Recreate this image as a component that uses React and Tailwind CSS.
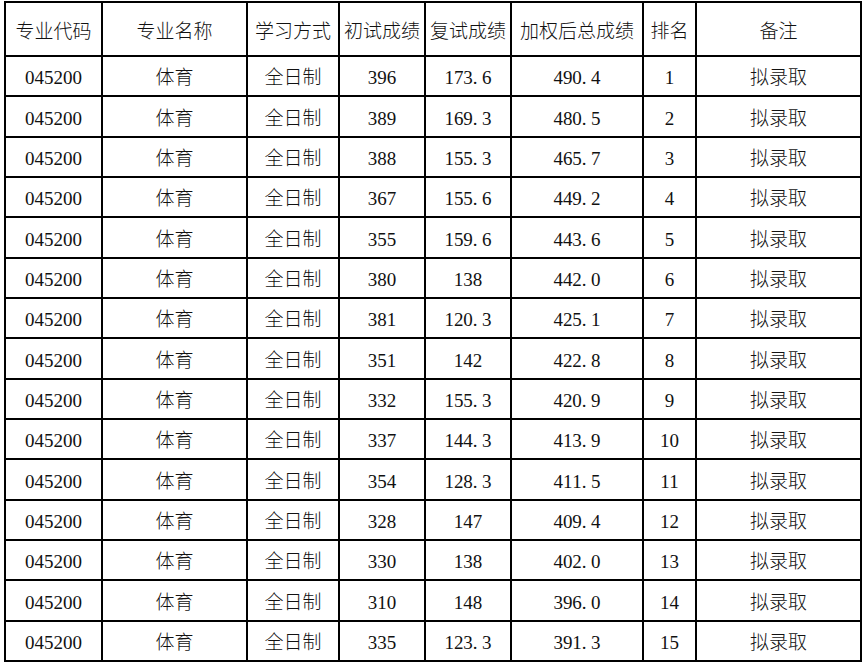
import React from "react";

const rows = [
  ["396", "173.6", "490.4", "1"],
  ["389", "169.3", "480.5", "2"],
  ["388", "155.3", "465.7", "3"],
  ["367", "155.6", "449.2", "4"],
  ["355", "159.6", "443.6", "5"],
  ["380", "138", "442.0", "6"],
  ["381", "120.3", "425.1", "7"],
  ["351", "142", "422.8", "8"],
  ["332", "155.3", "420.9", "9"],
  ["337", "144.3", "413.9", "10"],
  ["354", "128.3", "411.5", "11"],
  ["328", "147", "409.4", "12"],
  ["330", "138", "402.0", "13"],
  ["310", "148", "396.0", "14"],
  ["335", "123.3", "391.3", "15"],
];

const headers = ["专业代码", "专业名称", "学习方式", "初试成绩", "复试成绩", "加权后总成绩", "排名", "备注"];

function Num({ v }) {
  if (!v.includes(".")) return <span>{v}</span>;
  return (
    <span className="inline-flex">
      {v.split("").map((c, i) => (
        <span key={i} className={c === "." ? "inline-block w-[9.4px] text-left" : "inline-block w-[9.4px] text-center"}>
          {c}
        </span>
      ))}
    </span>
  );
}

function Cell({ children, className = "" }) {
  return (
    <div className={"bg-white flex items-center justify-center whitespace-nowrap " + className}>
      {children}
    </div>
  );
}

export default function App() {
  return (
    <div className="bg-white w-[867px] h-[668px] pt-[1px] pl-[4px] text-[19px] font-light text-[#111] leading-none [font-family:'Liberation_Serif','Noto_Sans_CJK_SC',serif]">
      <div className="grid w-fit bg-black border-2 border-black gap-[2px] grid-cols-[95px_143px_90px_84px_84px_130px_51px_163px] grid-rows-[52px_38px_39px_38px_38px_39px_38px_38px_39px_38px_38px_39px_38px_38px_39px_38px]">
        {headers.map((h) => (
          <Cell key={h} className="pt-[4px]">{h}</Cell>
        ))}
        {rows.map((r, i) => (
          <React.Fragment key={i}>
            <Cell className="pt-[3px]">045200</Cell>
            <Cell className="pt-[3px]">体育</Cell>
            <Cell className="pt-[3px]">全日制</Cell>
            <Cell className="pt-[3px]"><Num v={r[0]} /></Cell>
            <Cell className="pt-[3px]"><Num v={r[1]} /></Cell>
            <Cell className="pt-[3px]"><Num v={r[2]} /></Cell>
            <Cell className="pt-[3px]">{r[3]}</Cell>
            <Cell className="pt-[3px]">拟录取</Cell>
          </React.Fragment>
        ))}
      </div>
    </div>
  );
}
